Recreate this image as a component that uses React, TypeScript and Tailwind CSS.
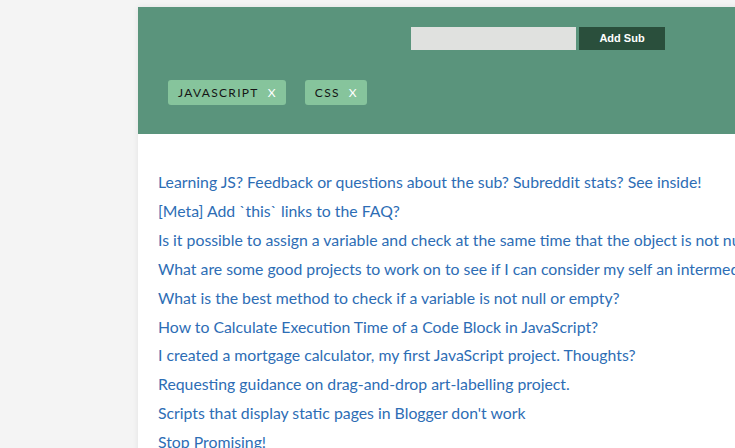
import React from 'react'

const posts = [
  'Learning JS? Feedback or questions about the sub? Subreddit stats? See inside!',
  '[Meta] Add `this` links to the FAQ?',
  'Is it possible to assign a variable and check at the same time that the object is not null?',
  'What are some good projects to work on to see if I can consider my self an intermediate JS developer?',
  'What is the best method to check if a variable is not null or empty?',
  'How to Calculate Execution Time of a Code Block in JavaScript?',
  'I created a mortgage calculator, my first JavaScript project. Thoughts?',
  'Requesting guidance on drag-and-drop art-labelling project.',
  "Scripts that display static pages in Blogger don't work",
  'Stop Promising!',
  'Help with a simple function'
]

const subs = ['javascript', 'css']

export default function App() {
  return (
    <div className="h-[448px] w-[735px] overflow-hidden bg-[#f4f4f4] pl-[138px] pt-[7px] font-['Lato',sans-serif]">
      <div className="w-[900px] h-[600px] bg-white shadow-[0_0_6px_rgba(0,0,0,0.08)]">
        {/* header */}
        <div className="h-[127px] bg-[#5a947c] pt-[20px]">
          <div className="flex pl-[273px]">
            <input className="h-[23px] w-[165px] bg-[#e0e1df] outline-none" />
            <button className="ml-[3px] h-[23px] w-[86px] bg-[#2a4f3c] font-['Liberation_Sans',sans-serif] text-[11px] font-bold text-white">
              Add Sub
            </button>
          </div>
          <div className="mt-[30px] flex gap-[19px] pl-[30px]">
            {subs.map(s => (
              <div
                key={s}
                className="flex h-[25px] items-center rounded-[3px] bg-[#86c49c] pl-[10px] pr-[9px] text-[12px] uppercase tracking-[1.3px] text-[#151515]"
              >
                <span>{s}</span>
                <span className="ml-[9px] text-white">X</span>
              </div>
            ))}
          </div>
        </div>

        {/* posts */}
        <ul className="pl-[20px] pt-[34px]">
          {posts.map(p => (
            <li key={p} className="whitespace-nowrap text-[15.8px] leading-[28.9px] text-[#2d6db5]">
              <a href="#">{p}</a>
            </li>
          ))}
        </ul>
      </div>
    </div>
  )
}
